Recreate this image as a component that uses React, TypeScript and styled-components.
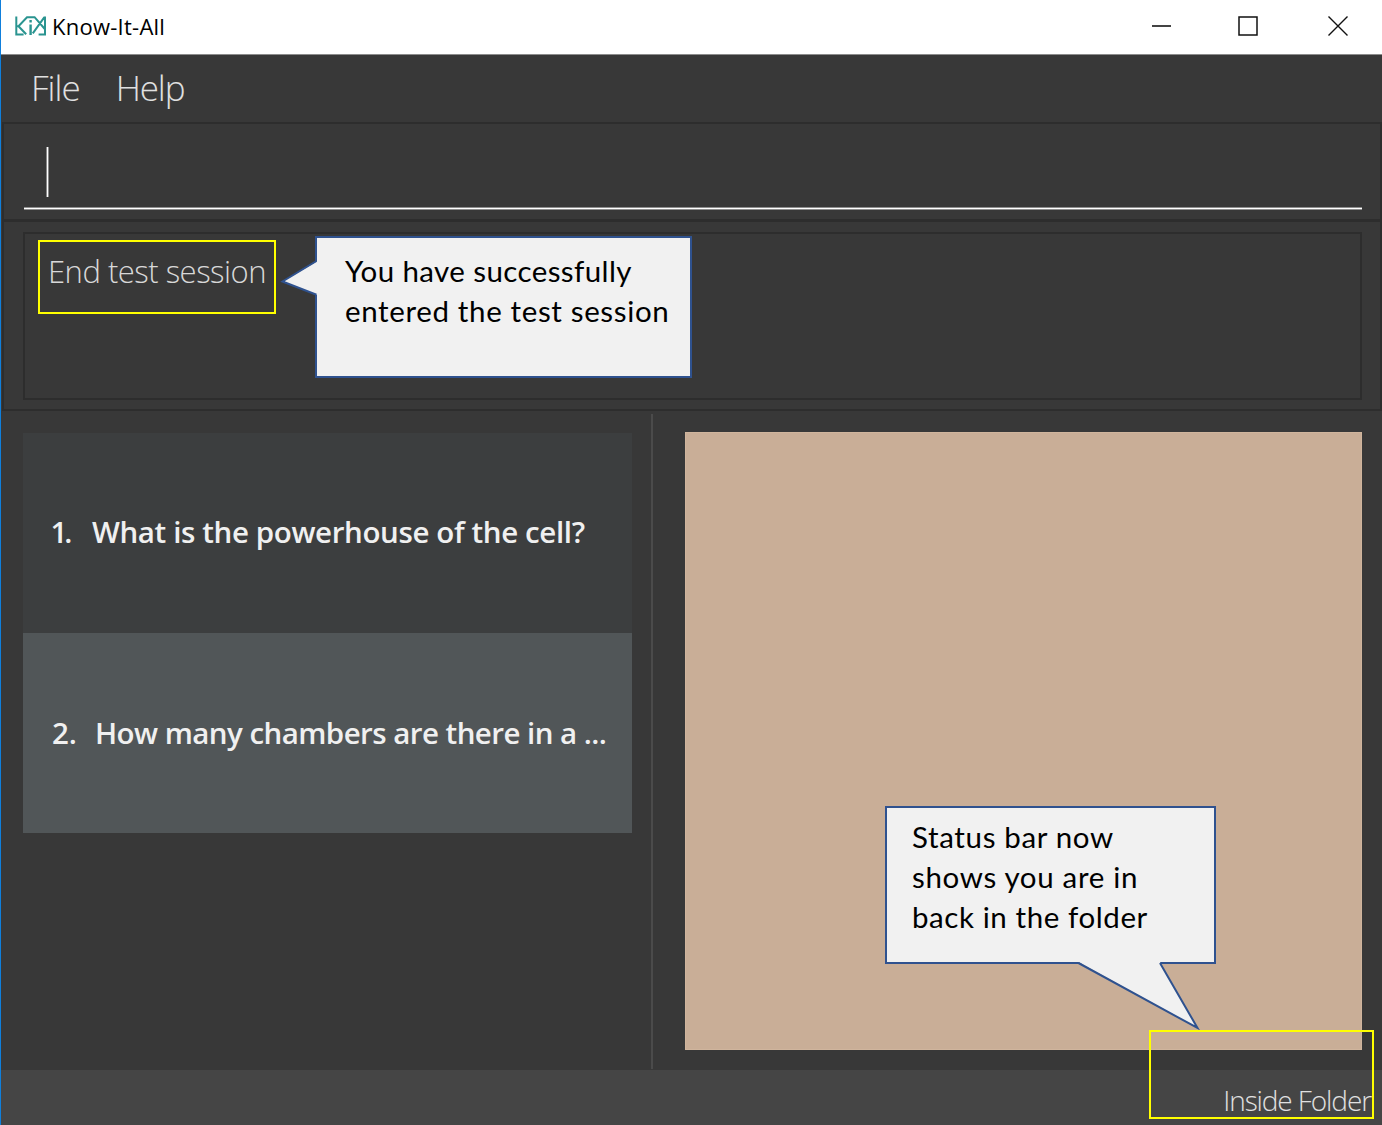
import React from "react";
import styled, { createGlobalStyle } from "styled-components";

const GlobalStyle = createGlobalStyle`
  html, body { margin: 0; padding: 0; background: #383838; }
  *, *::before, *::after { box-sizing: border-box; }
`;

const uiFont = `"Open Sans", "Noto Sans", sans-serif`;
const calloutFont = `Lato, "Noto Sans", sans-serif`;

const Window = styled.div`
  position: relative;
  display: flex;
  flex-direction: column;
  width: 1382px;
  height: 1125px;
  overflow: hidden;
  background: #383838;
  border-left: 1px solid #0f7fdc;
  font-family: ${uiFont};
`;

const TitleBar = styled.header`
  display: flex;
  align-items: center;
  flex: none;
  height: 55px;
  padding: 0 34px 2px 14px;
  background: #fff;
  border-bottom: 1px solid #8c8c8c;
`;

const Title = styled.h1<{ $spacing: number }>`
  flex: 1;
  margin: 0 0 0 5px;
  font-size: 22px;
  font-weight: 400;
  line-height: 30px;
  letter-spacing: ${(p) => p.$spacing}px;
  color: #000;
`;

const WindowButtons = styled.div`
  display: flex;
  gap: 70px;

  svg {
    display: block;
  }

  svg:first-child {
    margin-right: -3px;
  }
`;

const MenuBar = styled.nav`
  display: flex;
  flex: none;
  height: 67px;
  padding: 0 30px;
  gap: 36px;
`;

const MenuItem = styled.span<{ $spacing: number }>`
  font-size: 35px;
  font-weight: 300;
  line-height: 66px;
  letter-spacing: ${(p) => p.$spacing}px;
  color: #e0e0e0;
`;

const CommandPane = styled.section`
  flex: none;
  height: 99px;
  margin-left: 1px;
  padding: 23px 18px 0 20px;
  border: 2px solid #2d2d2d;
`;

const CommandField = styled.div`
  height: 63px;
  padding-left: 22px;
  border-bottom: 1px solid #8e8e8e;
  box-shadow: inset 0 -1px #fff, inset 0 -2px #8e8e8e;
`;

const Caret = styled.span`
  display: block;
  width: 3px;
  height: 50px;
  background: #fff;
  border: solid #8a8a8a;
  border-width: 0 1px;
`;

const ResultPane = styled.section`
  flex: none;
  height: 190px;
  margin-left: 1px;
  padding: 10px 18px 9px 19px;
  border: 2px solid #2d2d2d;
  border-top-width: 1px;
`;

const ResultBox = styled.div`
  height: 168px;
  padding: 14px 23px;
  border: 2px solid #2d2d2d;
`;

const ResultText = styled.p<{ $spacing: number }>`
  margin: 0;
  font-size: 31px;
  font-weight: 300;
  line-height: 46px;
  letter-spacing: ${(p) => p.$spacing}px;
  color: #d8d8d8;
`;

const Workspace = styled.main`
  display: flex;
  flex: 1;
  min-height: 0;
  padding: 3px 20px 0 22px;
`;

const CardList = styled.ol`
  flex: none;
  width: 609px;
  margin: 19px 19px 0 0;
  padding: 0;
  list-style: none;
`;

const Card = styled.li<{ $alt?: boolean }>`
  display: flex;
  align-items: center;
  height: 200px;
  padding: 0 0 ${(p) => (p.$alt ? 2 : 4)}px 29px;
  background: ${(p) => (p.$alt ? "#515658" : "#3c3e3f")};
  font-size: 29.5px;
  font-weight: 600;
  color: #f0f0f0;
  white-space: nowrap;
`;

const CardIndex = styled.span<{ $width: number; $spacing: number }>`
  width: ${(p) => p.$width}px;
  letter-spacing: ${(p) => p.$spacing}px;
  text-indent: ${(p) => p.$spacing / 2}px;
`;

const CardQuestion = styled.span<{ $spacing: number }>`
  letter-spacing: ${(p) => p.$spacing}px;
`;

const Divider = styled.div`
  flex: none;
  width: 2px;
  height: 655px;
  margin-right: 32px;
  background: #4b4b4b;
`;

const AnswerPanel = styled.div`
  flex: 1;
  height: 618px;
  margin-top: 18px;
  background: #c9ae97;
  border: 1px solid #d0b59d;
`;

const StatusBar = styled.footer`
  display: flex;
  justify-content: flex-end;
  flex: none;
  height: 55px;
  padding: 7px 11px 0 0;
  background: #454545;
`;

const StatusText = styled.span<{ $spacing: number }>`
  font-size: 28px;
  font-weight: 300;
  line-height: 46px;
  letter-spacing: ${(p) => p.$spacing}px;
  color: #e0e0e0;
`;

/* Annotations float above the window content. */
type Box = { $x: number; $y: number; $w: number; $h: number };

const Highlight = styled.div<Box>`
  position: absolute;
  left: ${(p) => p.$x - 1}px;
  top: ${(p) => p.$y}px;
  width: ${(p) => p.$w}px;
  height: ${(p) => p.$h}px;
  border: 2px solid #ffff00;
`;

const Callout = styled.aside<Box & { $pad: string }>`
  position: absolute;
  left: ${(p) => p.$x - 1}px;
  top: ${(p) => p.$y}px;
  width: ${(p) => p.$w}px;
  height: ${(p) => p.$h}px;
  padding: ${(p) => p.$pad};
  background: #f1f1f1;
  border: 2px solid #2f528f;
`;

const CalloutLine = styled.div<{ $spacing: number }>`
  font-family: ${calloutFont};
  font-size: 29.5px;
  line-height: 40px;
  letter-spacing: ${(p) => p.$spacing}px;
  color: #000;
  white-space: nowrap;
`;

const Tail = styled.svg<{ $x: number; $y: number }>`
  position: absolute;
  left: ${(p) => p.$x - 1}px;
  top: ${(p) => p.$y}px;
  overflow: visible;
`;

const Logo = () => (
  <svg width="32" height="20" viewBox="0 0 32 20" fill="none" stroke="#2a9490" strokeWidth="2">
    <path d="M1.3 0.5V18.6H8.6M1.3 10.2H3.5L12 1.2H19.6L29.8 13M3.5 10.2L11.2 18.3M30 0.5V18.6H23.6M29.4 1.2L17.8 17.4" />
    <path d="M15.6 8.4V19M15.6 4V6.4" strokeWidth="2.4" />
  </svg>
);

const Minimize = () => (
  <svg width="20" height="20" viewBox="0 0 20 20">
    <path d="M1 10H20" stroke="#444" strokeWidth="2" />
  </svg>
);

const Maximize = () => (
  <svg width="20" height="20" viewBox="0 0 20 20">
    <rect x="1" y="1" width="18" height="18" fill="none" stroke="#111" strokeWidth="1.5" />
  </svg>
);

const Close = () => (
  <svg width="20" height="20" viewBox="0 0 20 20">
    <path d="M0.5 0.5L19.5 19.5M19.5 0.5L0.5 19.5" stroke="#111" strokeWidth="1.4" />
  </svg>
);

export default function App() {
  return (
    <>
      <GlobalStyle />
      <Window>
        <TitleBar>
          <Logo />
          <Title $spacing={0.25}>Know-It-All</Title>
          <WindowButtons>
            <Minimize />
            <Maximize />
            <Close />
          </WindowButtons>
        </TitleBar>
        <MenuBar>
          <MenuItem $spacing={-1}>File</MenuItem>
          <MenuItem $spacing={-1.1}>Help</MenuItem>
        </MenuBar>
        <CommandPane>
          <CommandField>
            <Caret />
          </CommandField>
        </CommandPane>
        <ResultPane>
          <ResultBox>
            <ResultText $spacing={-0.5}>End test session</ResultText>
          </ResultBox>
        </ResultPane>
        <Workspace>
          <CardList>
            <Card>
              <CardIndex $width={40} $spacing={-3}>1.</CardIndex>
              <CardQuestion $spacing={-0.38}>What is the powerhouse of the cell?</CardQuestion>
            </Card>
            <Card $alt>
              <CardIndex $width={43} $spacing={0}>2.</CardIndex>
              <CardQuestion $spacing={-0.55}>How many chambers are there in a ...</CardQuestion>
            </Card>
          </CardList>
          <Divider />
          <AnswerPanel />
        </Workspace>
        <StatusBar>
          <StatusText $spacing={-1.1}>Inside Folder</StatusText>
        </StatusBar>

        <Callout $x={315} $y={236} $w={377} $h={142} $pad="13px 0 0 28px">
          <CalloutLine $spacing={0.4}>You have successfully</CalloutLine>
          <CalloutLine $spacing={0.64}>entered the test session</CalloutLine>
        </Callout>
        <Tail $x={281} $y={260} width="36" height="36" viewBox="0 0 36 36">
          <path d="M37 0.8L1.5 21.5L37 35.5Z" fill="#f1f1f1" />
          <path d="M35.5 1L1.5 21.5L35.5 34.8" fill="none" stroke="#2f528f" strokeWidth="2" />
        </Tail>
        <Callout $x={885} $y={806} $w={331} $h={158} $pad="9px 0 0 25px">
          <CalloutLine $spacing={0.65}>Status bar now</CalloutLine>
          <CalloutLine $spacing={0.67}>shows you are in</CalloutLine>
          <CalloutLine $spacing={0.58}>back in the folder</CalloutLine>
        </Callout>
        <Tail $x={1078} $y={962} width="122" height="68" viewBox="0 0 122 68">
          <path d="M0.5 0L119.5 66L82 0Z" fill="#f1f1f1" />
          <path d="M0.5 1L119.5 66L82 1" fill="none" stroke="#2f528f" strokeWidth="2" />
        </Tail>
        <Highlight $x={38} $y={240} $w={238} $h={74} />
        <Highlight $x={1149} $y={1030} $w={225} $h={89} />
      </Window>
    </>
  );
}
